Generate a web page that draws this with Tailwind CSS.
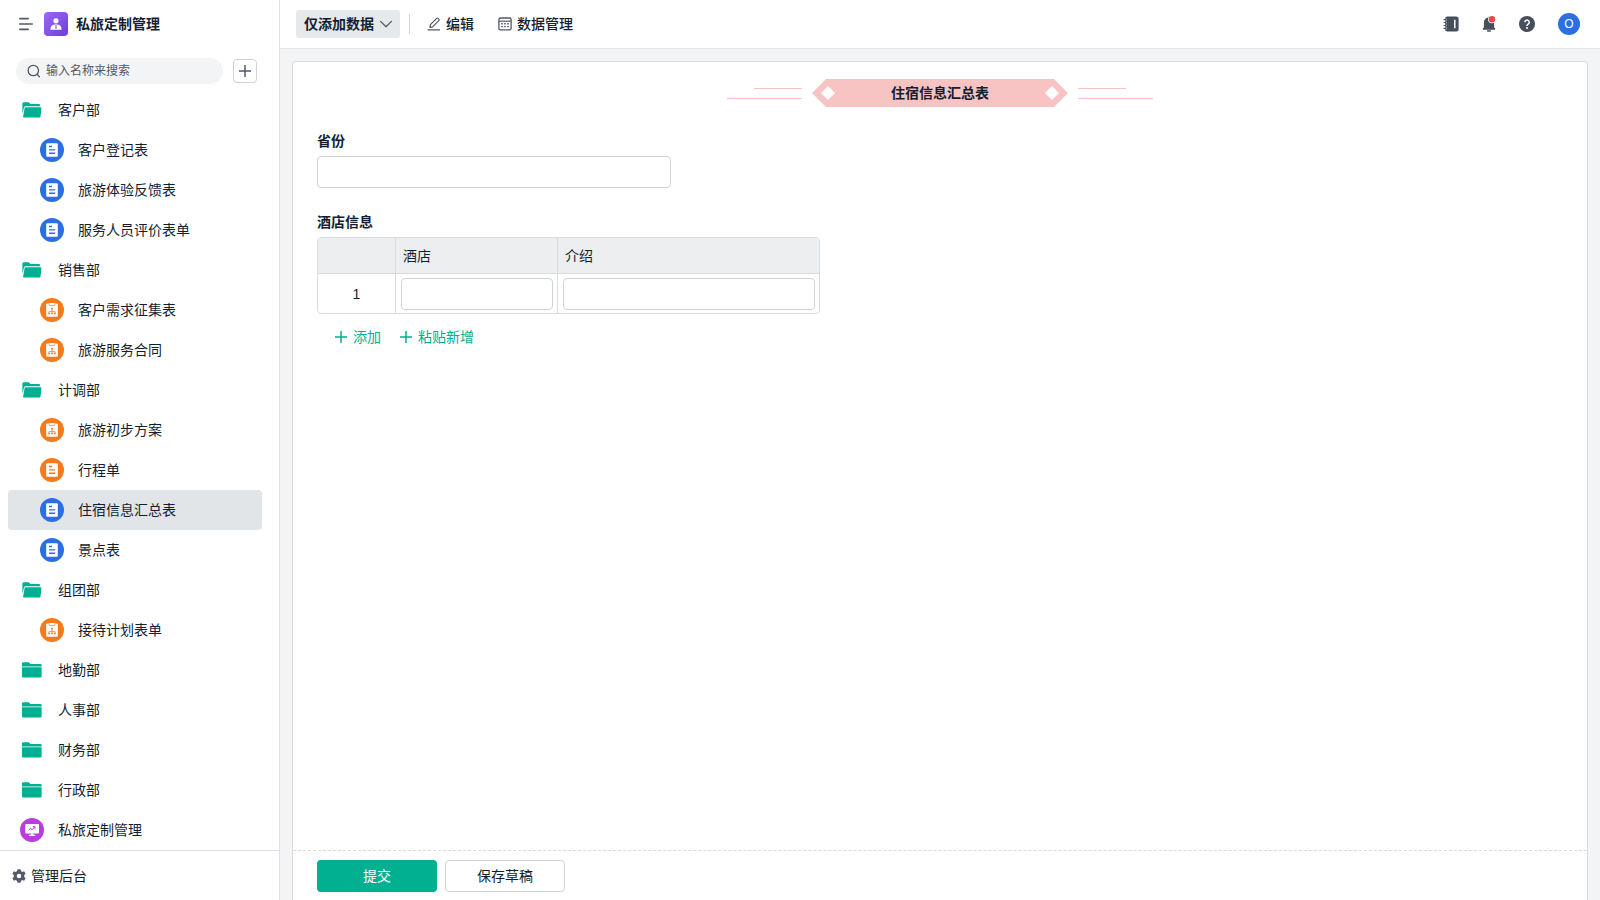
<!DOCTYPE html>
<html lang="zh-CN">
<head>
<meta charset="utf-8">
<title>私旅定制管理</title>
<script src="https://cdn.jsdelivr.net/npm/@tailwindcss/browser@4"></script>
</head>
<body class="flex h-screen overflow-hidden bg-white font-['Liberation_Sans','Noto_Sans_CJK_SC',sans-serif] text-sm text-[#141e31]">

<svg class="hidden" aria-hidden="true">
  <symbol id="folder-open" viewBox="0 0 20 16">
    <path fill="#00b090" d="M.4 1.500A1.200 1.200 0 0 1 1.600.3h5.200l1.600 1.800h8.600a1 1 0 0 1 1 1v1.100H3.600a1.600 1.600 0 0 0-1.600 1.300L.4 12z"/>
    <path fill="#00b090" d="M3.400 5.200h15.400a.7.7 0 0 1 .7.8l-1 8.600a1.200 1.200 0 0 1-1.200 1H1.900a.8.8 0 0 1-.8-1l1.500-8.700a.9.9 0 0 1 .8-.7z"/>
  </symbol>
  <symbol id="folder" viewBox="0 0 20 16">
    <path fill="#00b090" d="M0 1.500A1.200 1.200 0 0 1 1.200.3h5.600l1.600 1.800h10a1.200 1.200 0 0 1 1.200 1.200v1.100H0z"/>
    <path fill="#00b090" d="M0 5.300h19.600v9a1.300 1.300 0 0 1-1.300 1.300h-17A1.300 1.300 0 0 1 0 14.300z"/>
  </symbol>
  <symbol id="form" viewBox="0 0 24 24">
    <circle cx="12" cy="12" r="12" fill="currentColor"/>
    <rect x="6.2" y="5.2" width="11.600" height="13.600" rx="1" fill="#fff"/>
    <path d="M9 8.500h3M9 11.900h6.200M9 15.300h6.200" stroke="currentColor" stroke-width="1.400"/>
  </symbol>
  <symbol id="flow" viewBox="0 0 24 24">
    <circle cx="12" cy="12" r="12" fill="currentColor"/>
    <rect x="6.200" y="5.600" width="11.600" height="13.200" rx="1" fill="#fff"/>
    <path d="M9.200 6v.8a.8.8 0 0 0 .8.8h4a.8.8 0 0 0 .8-.8V6" fill="none" stroke="currentColor" stroke-width=".7"/>
    <rect x="9.700" y="4.900" width="4.600" height="1.800" rx=".5" fill="#fff"/>
    <path d="M12 11v4M9 15v-1.500h6V15" fill="none" stroke="currentColor" stroke-width=".7"/>
    <path d="M11.100 9.700h1.800v1.700h-1.800zM8.200 14.700h1.700v1.600H8.200zM11.200 14.700h1.700v1.600h-1.700zM14.100 14.700h1.700v1.600h-1.700z" fill="currentColor"/>
  </symbol>
  <symbol id="plus" viewBox="0 0 12 12">
    <path d="M6 0v12M0 6h12" stroke="currentColor" stroke-width="1.500"/>
  </symbol>
</svg>

<aside class="flex w-[280px] shrink-0 flex-col border-r border-[#dfe1e4]">
  <header class="flex h-12 shrink-0 items-center pl-[19px]">
    <button aria-label="收起菜单" class="text-[#525967]">
      <svg class="h-3.5 w-3.5" viewBox="0 0 14 14" fill="none" stroke="currentColor" stroke-width="1.600" stroke-linecap="round"><path d="M.8 1.600h8.400M.8 7h12.400M.8 12.400h8.400"/></svg>
    </button>
    <svg class="ml-[11px] h-6 w-6" viewBox="0 0 24 24">
      <defs><linearGradient id="logo" x1="0" y1="0" x2="1" y2="1"><stop offset="0" stop-color="#9c6af4"/><stop offset="1" stop-color="#6e3ddc"/></linearGradient></defs>
      <rect width="24" height="24" rx="4" fill="url(#logo)"/>
      <circle cx="12" cy="8.800" r="2.600" fill="#fff"/>
      <path fill="#fff" d="M6.600 17.800v-1.300c0-2.200 1.600-3.700 3.700-3.900h3.400c2.100.2 3.700 1.700 3.700 3.900v1.300z"/>
      <path fill="#8350e6" d="M11.300 13h1.400l-.4 1.100.5 2-.8.9-.8-.9.500-2z"/>
    </svg>
    <h1 class="ml-2 font-bold">私旅定制管理</h1>
  </header>

  <div class="flex h-[42px] shrink-0 items-center gap-2.5 pt-2 pr-[22px] pb-1 pl-4">
    <label class="flex h-[26px] flex-1 items-center rounded-full bg-[#f2f4f5] pl-[11px] text-[#525967]">
      <svg class="mr-[5px] h-3.5 w-3.5 shrink-0" viewBox="0 0 14 14" fill="none" stroke="currentColor" stroke-width="1.300" stroke-linecap="round"><circle cx="6.300" cy="6.500" r="5.200"/><path d="m10.200 10.400 2.200 2.300"/></svg>
      <input type="text" aria-label="搜索" placeholder="输入名称来搜索" class="w-full min-w-0 bg-transparent text-xs outline-none placeholder:text-[#525967]">
    </label>
    <button aria-label="新建" class="grid h-6 w-6 place-items-center rounded border border-[#cfd2d6] text-[#525967]"><svg class="h-3 w-3"><use href="#plus"/></svg></button>
  </div>

  <nav class="min-h-0 flex-1 overflow-hidden pr-[17px] pl-2">
    <a href="#" class="flex h-10 items-center gap-4 pl-3.5"><svg class="h-4 w-5"><use href="#folder-open"/></svg>客户部</a>
    <a href="#" class="flex h-10 items-center gap-3.5 pl-8"><svg class="h-6 w-6 text-[#2b6fe3]"><use href="#form"/></svg>客户登记表</a>
    <a href="#" class="flex h-10 items-center gap-3.5 pl-8"><svg class="h-6 w-6 text-[#2b6fe3]"><use href="#form"/></svg>旅游体验反馈表</a>
    <a href="#" class="flex h-10 items-center gap-3.5 pl-8"><svg class="h-6 w-6 text-[#2b6fe3]"><use href="#form"/></svg>服务人员评价表单</a>
    <a href="#" class="flex h-10 items-center gap-4 pl-3.5"><svg class="h-4 w-5"><use href="#folder-open"/></svg>销售部</a>
    <a href="#" class="flex h-10 items-center gap-3.5 pl-8"><svg class="h-6 w-6 text-[#f57a1c]"><use href="#flow"/></svg>客户需求征集表</a>
    <a href="#" class="flex h-10 items-center gap-3.5 pl-8"><svg class="h-6 w-6 text-[#f57a1c]"><use href="#flow"/></svg>旅游服务合同</a>
    <a href="#" class="flex h-10 items-center gap-4 pl-3.5"><svg class="h-4 w-5"><use href="#folder-open"/></svg>计调部</a>
    <a href="#" class="flex h-10 items-center gap-3.5 pl-8"><svg class="h-6 w-6 text-[#f57a1c]"><use href="#flow"/></svg>旅游初步方案</a>
    <a href="#" class="flex h-10 items-center gap-3.5 pl-8"><svg class="h-6 w-6 text-[#f57a1c]"><use href="#form"/></svg>行程单</a>
    <a href="#" aria-current="page" class="flex h-10 items-center gap-3.5 rounded bg-[#e1e5e8] pl-8"><svg class="h-6 w-6 text-[#2b6fe3]"><use href="#form"/></svg>住宿信息汇总表</a>
    <a href="#" class="flex h-10 items-center gap-3.5 pl-8"><svg class="h-6 w-6 text-[#2b6fe3]"><use href="#form"/></svg>景点表</a>
    <a href="#" class="flex h-10 items-center gap-4 pl-3.5"><svg class="h-4 w-5"><use href="#folder-open"/></svg>组团部</a>
    <a href="#" class="flex h-10 items-center gap-3.5 pl-8"><svg class="h-6 w-6 text-[#f57a1c]"><use href="#flow"/></svg>接待计划表单</a>
    <a href="#" class="flex h-10 items-center gap-4 pl-3.5"><svg class="h-4 w-5"><use href="#folder"/></svg>地勤部</a>
    <a href="#" class="flex h-10 items-center gap-4 pl-3.5"><svg class="h-4 w-5"><use href="#folder"/></svg>人事部</a>
    <a href="#" class="flex h-10 items-center gap-4 pl-3.5"><svg class="h-4 w-5"><use href="#folder"/></svg>财务部</a>
    <a href="#" class="flex h-10 items-center gap-4 pl-3.5"><svg class="h-4 w-5"><use href="#folder"/></svg>行政部</a>
    <a href="#" class="flex h-10 items-center gap-3.5 pl-3">
      <svg class="h-6 w-6" viewBox="0 0 24 24"><circle cx="12" cy="12" r="12" fill="#b93cdb"/><rect x="5.200" y="6" width="13.800" height="9.600" rx="1" fill="#fff"/><path d="M10.800 15.400h2.600v1.400h1.800v1.100H8.800v-1.100h2z" fill="#fff"/><path d="m8.600 12.200 2-1.800 1.600 1.300 2.600-2.900M12.800 8.700h2.200v2" fill="none" stroke="#b93cdb" stroke-width="1"/></svg>私旅定制管理</a>
  </nav>

  <footer class="flex h-[50px] shrink-0 items-center border-t border-[#dfe1e4] pl-3">
    <a href="#" class="flex items-center gap-[5px]">
      <svg class="h-3.5 w-3.5 text-[#525967]" viewBox="0 0 14 14"><path fill="currentColor" fill-rule="evenodd" d="M5.500.2h3l.4 1.900 1.300.8 1.900-.7 1.500 2.600L12.200 6v2l1.400 1.200-1.500 2.600-1.900-.7-1.300.8-.4 1.900h-3l-.4-1.900-1.300-.8-1.900.7L.4 9.200 1.800 8V6L.4 4.800l1.500-2.600 1.900.7 1.300-.8zM7 4.700a2.300 2.300 0 1 0 0 4.600 2.300 2.300 0 0 0 0-4.600z"/></svg>管理后台</a>
  </footer>
</aside>

<div class="flex min-w-0 flex-1 flex-col">
  <header class="flex h-[49px] shrink-0 items-center border-b border-[#e3e5e8] pr-5 pl-4">
    <button class="flex h-7 items-center gap-1.5 rounded bg-[#e6e9ec] px-2 font-bold">仅添加数据
      <svg class="h-3 w-3 text-[#525967]" viewBox="0 0 12 12" fill="none" stroke="currentColor" stroke-width="1.300" stroke-linecap="round" stroke-linejoin="round"><path d="m.6 3.400 5.400 5.400 5.400-5.400"/></svg>
    </button>
    <span class="mx-[9px] h-5 w-px bg-[#d2d5d9]"></span>
    <button class="ml-2 flex items-center gap-[5px] font-medium">
      <svg class="h-3.5 w-3.5 text-[#525967]" viewBox="0 0 14 14" fill="none" stroke="currentColor" stroke-width="1.200" stroke-linejoin="round"><path d="M2.900 10.400 3.400 7.600 9.600 1.400a1 1 0 0 1 1.400 0l.8.8a1 1 0 0 1 0 1.400L5.600 9.800zM.6 12.900h12.400"/></svg>编辑</button>
    <button class="ml-6 flex items-center gap-[5px] font-medium">
      <svg class="h-3.5 w-3.5 text-[#525967]" viewBox="0 0 14 14"><rect x=".9" y="1" width="12.200" height="11.800" rx="1.400" fill="none" stroke="currentColor" stroke-width="1.300"/><path d="M1 4.200h12" stroke="currentColor" stroke-width="1.200"/><path d="M3.200 6.100h1.600v1.300H3.200zM6.200 6.100h1.600v1.300H6.200zM9.200 6.100h1.600v1.300H9.200zM3.200 9h1.600v1.300H3.200zM6.200 9h1.600v1.300H6.200zM9.200 9h1.600v1.300H9.200z" fill="currentColor"/></svg>数据管理</button>
    <div class="ml-auto flex items-center text-[#474e5c]">
      <div class="mr-[23px] flex items-center gap-[22px]">
        <button aria-label="通讯录"><svg class="h-4 w-4" viewBox="0 0 16 16"><rect x="2" y=".6" width="13.600" height="14.800" rx="2.500" fill="currentColor"/><path d="M11.800 3.800v8.400" stroke="#fff" stroke-width="1.500"/><path d="M.4 3.600h3.200M.4 6.500h3.200M.4 9.500h3.200M.4 12.400h3.200" stroke="#fff" stroke-width="1.700"/><path d="M.6 3.600h2.800M.6 6.500h2.800M.6 9.500h2.800M.6 12.400h2.800" stroke="currentColor" stroke-width="1.100"/></svg></button>
        <button aria-label="消息"><svg class="h-4 w-4" viewBox="0 0 16 16"><path fill="currentColor" d="M8 .7c.7 0 1.100.4 1.100.9 2.500.5 4 2.500 4 5v5.200h1v2H1.900v-2h1V6.600c0-2.500 1.500-4.500 4-5 0-.5.4-.9 1.100-.9zM6 14.200h4v.7a.9.9 0 0 1-.9.9H6.900a.9.9 0 0 1-.9-.9z"/><circle cx="11" cy="3.200" r="4" fill="#fff"/><circle cx="11" cy="3.200" r="3.200" fill="#e8474b"/></svg></button>
        <button aria-label="帮助"><svg class="h-4 w-4" viewBox="0 0 16 16"><circle cx="8" cy="8" r="8" fill="currentColor"/><path d="M5.800 6.200a2.200 2.200 0 1 1 3.400 1.900C8.400 8.600 8 8.900 8 9.900" fill="none" stroke="#fff" stroke-width="1.500"/><circle cx="8" cy="12.100" r="1" fill="#fff"/></svg></button>
      </div>
      <button aria-label="账户" class="grid h-[22px] w-[22px] place-items-center rounded-full bg-[#2b6fe3] text-xs text-white">O</button>
    </div>
  </header>

  <main class="flex min-h-0 flex-1 flex-col bg-[#f2f4f5] px-3 pt-3">
    <form class="flex min-h-0 flex-1 flex-col rounded-t border border-b-0 border-[#d9dcdf] bg-white">
      <div class="min-h-0 flex-1 px-6 pt-[17px]">
        <div class="flex items-center justify-center gap-2.5">
          <span class="flex flex-col items-end gap-[9px]"><i class="h-px w-12 bg-[#f7c3c3]"></i><i class="h-px w-[75px] bg-[#f7c3c3]"></i></span>
          <h2 class="flex h-7 w-64 items-center justify-between bg-[#f7c3c3] px-[9px] font-bold [clip-path:polygon(14px_0,calc(100%-14px)_0,100%_50%,calc(100%-14px)_100%,14px_100%,0_50%)]">
            <svg class="h-3.5 w-3.5" viewBox="0 0 14 14"><path d="m7 0 7 7-7 7-7-7z" fill="#fff"/></svg>
            住宿信息汇总表
            <svg class="h-3.5 w-3.5" viewBox="0 0 14 14"><path d="m7 0 7 7-7 7-7-7z" fill="#fff"/></svg>
          </h2>
          <span class="flex flex-col items-start gap-[9px]"><i class="h-px w-12 bg-[#f7c3c3]"></i><i class="h-px w-[75px] bg-[#f7c3c3]"></i></span>
        </div>

        <div class="mt-6">
          <label for="province" class="block leading-5 font-bold">省份</label>
          <input id="province" type="text" class="mt-[5px] block h-8 w-[354px] rounded border border-[#cfd2d6] px-2 outline-none">
        </div>

        <h3 id="hotel-label" class="mt-6 leading-5 font-bold">酒店信息</h3>
        <div class="mt-[5px] w-[503px] overflow-hidden rounded-sm border border-[#d9dcdf]">
          <table aria-labelledby="hotel-label" class="w-full table-fixed border-separate border-spacing-0">
            <colgroup><col class="w-[78px]"><col class="w-[162px]"><col></colgroup>
            <thead class="bg-[#edeef0]">
              <tr class="h-9 text-left">
                <td class="border-r border-b border-[#d9dcdf]"></td>
                <th id="c-hotel" scope="col" class="border-r border-b border-[#d9dcdf] px-[7px] font-normal">酒店</th>
                <th id="c-intro" scope="col" class="border-b border-[#d9dcdf] px-[7px] font-normal">介绍</th>
              </tr>
            </thead>
            <tbody>
              <tr class="h-[39px]">
                <td class="border-r border-[#d9dcdf] text-center">1</td>
                <td class="border-r border-[#d9dcdf] pr-1 pl-[5px]"><input type="text" aria-labelledby="c-hotel" class="block h-8 w-full rounded border border-[#cfd2d6] px-2 outline-none"></td>
                <td class="pr-1 pl-[5px]"><input type="text" aria-labelledby="c-intro" class="block h-8 w-full rounded border border-[#cfd2d6] px-2 outline-none"></td>
              </tr>
            </tbody>
          </table>
        </div>
        <div class="mt-[11px] flex gap-[19px] pl-[18px] leading-6 text-[#00b090]">
          <button type="button" class="flex items-center gap-1.5"><svg class="h-3 w-3"><use href="#plus"/></svg>添加</button>
          <button type="button" class="flex items-center gap-1.5"><svg class="h-3 w-3"><use href="#plus"/></svg>粘贴新增</button>
        </div>
      </div>

      <div class="flex h-[50px] shrink-0 items-center gap-2 border-t border-dashed border-[#d9dcdf] px-6">
        <button type="submit" class="h-8 w-[120px] rounded bg-[#00b090] text-white">提交</button>
        <button type="button" class="h-8 w-[120px] rounded border border-[#cfd2d6] bg-white">保存草稿</button>
      </div>
    </form>
  </main>
</div>
</body>
</html>
